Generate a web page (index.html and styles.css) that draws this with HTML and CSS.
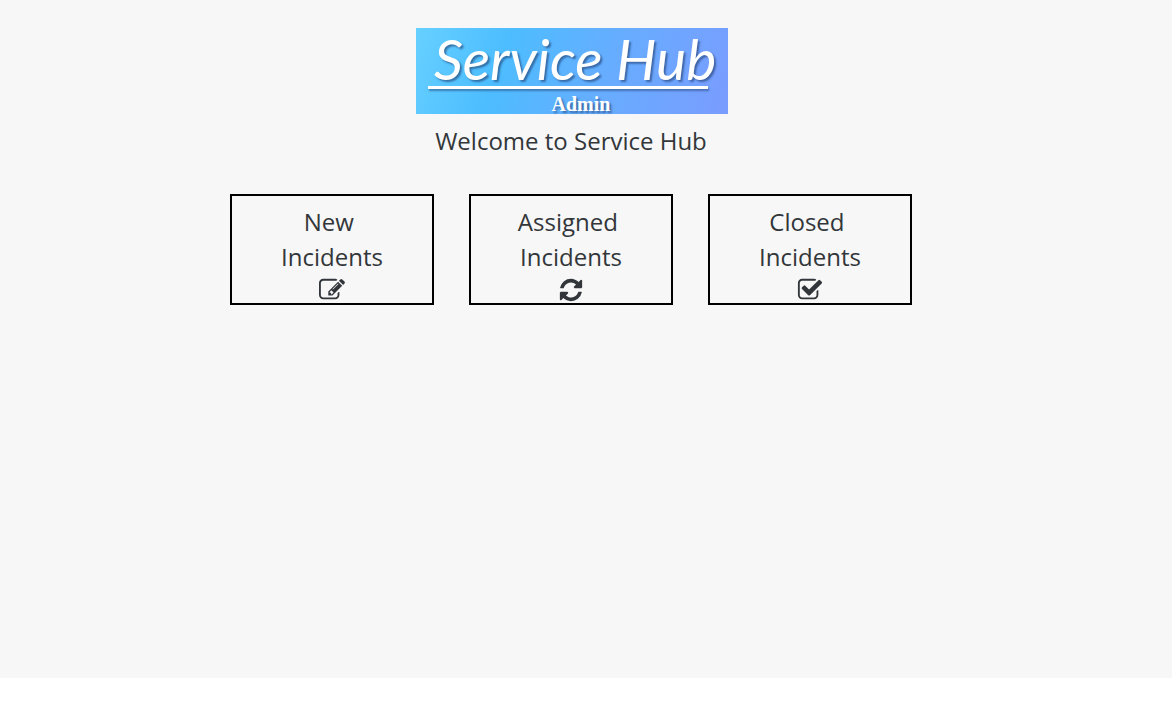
FILE: index.html
```html
<!DOCTYPE html>
<html lang="en">
<head>
<meta charset="utf-8">
<meta name="viewport" content="width=device-width, initial-scale=1">
<title>Service Hub Admin</title>
<link rel="stylesheet" href="styles.css">
</head>
<body>
<main class="page">
  <div class="logo">
    <span class="logo-name">Service Hub</span>
    <span class="logo-rule"></span>
    <span class="logo-role">Admin</span>
  </div>
  <h1 class="welcome">Welcome to Service Hub</h1>
  <nav class="cards">
    <a class="card" href="#new">
      <span>New&nbsp;</span>
      <span>Incidents</span>
      <svg class="icon" viewBox="0 0 1792 1792" aria-hidden="true"><path d="M888 1184l116-116-152-152-116 116v56h96v96h56zm440-720q-16-16-33 1l-350 350q-17 17-1 33t33-1l350-350q17-17 1-33zm80 594v190q0 119-84.500 203.500t-203.500 84.500h-832q-119 0-203.500-84.500t-84.500-203.500v-832q0-119 84.500-203.500t203.500-84.500h832q63 0 117 25 15 7 18 23 3 17-9 29l-49 49q-14 14-32 8-23-6-45-6h-832q-66 0-113 47t-47 113v832q0 66 47 113t113 47h832q66 0 113-47t47-113v-126q0-13 9-22l64-64q15-15 35-7t20 29zm-96-738l288 288-672 672h-288v-288zm444 132l-92 92-288-288 92-92q28-28 68-28t68 28l152 152q28 28 28 68t-28 68z"/></svg>
    </a>
    <a class="card" href="#assigned">
      <span>Assigned&nbsp;</span>
      <span>Incidents</span>
      <svg class="icon" viewBox="0 0 1792 1792" aria-hidden="true"><path d="M1639 1056q0 5-1 7-64 268-268 434.500t-478 166.500q-146 0-282.500-55t-243.500-157l-129 129q-19 19-45 19t-45-19-19-45v-448q0-26 19-45t45-19h448q26 0 45 19t19 45-19 45l-137 137q71 66 161 102t187 36q134 0 250-65t186-179q11-17 53-117 8-23 30-23h192q13 0 22.500 9.500t9.500 22.500zm25-800v448q0 26-19 45t-45 19h-448q-26 0-45-19t-19-45 19-45l138-138q-148-137-349-137-134 0-250 65t-186 179q-11 17-53 117-8 23-30 23h-199q-13 0-22.500-9.500t-9.500-22.500v-7q65-268 270-434.500t480-166.500q146 0 284 55.500t245 156.500l130-129q19-19 45-19t45 19 19 45z"/></svg>
    </a>
    <a class="card" href="#closed">
      <span>Closed&nbsp;</span>
      <span>Incidents</span>
      <svg class="icon" viewBox="0 0 1792 1792" aria-hidden="true"><path d="M1472 930v318q0 119-84.500 203.500t-203.500 84.500h-832q-119 0-203.500-84.500t-84.500-203.500v-832q0-119 84.500-203.500t203.500-84.500h832q63 0 117 25 15 7 18 23 3 17-9 29l-49 49q-10 10-23 10-3 0-9-2-23-6-45-6h-832q-66 0-113 47t-47 113v832q0 66 47 113t113 47h832q66 0 113-47t47-113v-254q0-13 9-22l64-64q10-10 23-10 6 0 12 3 20 8 20 29zm231-489l-814 814q-24 24-57 24t-57-24l-430-430q-24-24-24-57t24-57l110-110q24-24 57-24t57 24l263 263 647-647q24-24 57-24t57 24l110 110q24 24 24 57t-24 57z"/></svg>
    </a>
  </nav>
</main>
</body>
</html>
```
FILE: styles.css
```css
* {
  box-sizing: border-box;
}

body {
  margin: 0;
  background: #fff;
  color: #32363a;
  font-family: "Open Sans", "Noto Sans", sans-serif;
  font-size: 24px;
  line-height: 35px;
}

.page {
  display: flex;
  flex-direction: column;
  align-items: center;
  min-height: calc(100vh - 42px);
  padding: 28px 30px 28px 0;
  background: #f7f7f7;
}

.logo {
  display: flex;
  flex-direction: column;
  width: 312px;
  margin-left: 2px;
  padding: 0 12px;
  background: linear-gradient(110deg, #66d0ff 0%, #4dbdff 28%, #66adff 60%, #7a9cff 100%);
  color: #fff;
  text-shadow: 2px 2px 2px rgba(30, 60, 110, 0.6);
}

.logo-name {
  padding: 2px 0 0 6px;
  font-family: Lato, sans-serif;
  font-size: 57px;
  font-style: italic;
  font-weight: 400;
  line-height: 56px;
  white-space: nowrap;
}

.logo-rule {
  width: 280px;
  height: 3px;
  background: #fff;
  box-shadow: 1px 2px 2px rgba(30, 60, 110, 0.5);
}

.logo-role {
  padding: 5px 0 0 18px;
  font-family: "Liberation Serif", serif;
  font-size: 20px;
  font-weight: 700;
  line-height: 20px;
  text-align: center;
}

.welcome {
  margin: 9px 0 0;
  font-size: 24px;
  font-weight: 400;
}

.cards {
  display: flex;
  flex-wrap: wrap;
  justify-content: center;
  gap: 35px;
  margin-top: 36px;
}

.card {
  display: flex;
  flex-direction: column;
  align-items: center;
  width: 204px;
  padding-top: 8px;
  border: 2px solid #000;
  color: inherit;
  text-decoration: none;
}

.icon {
  width: 26px;
  height: 26px;
  margin-top: 3px;
  fill: currentColor;
}
```
